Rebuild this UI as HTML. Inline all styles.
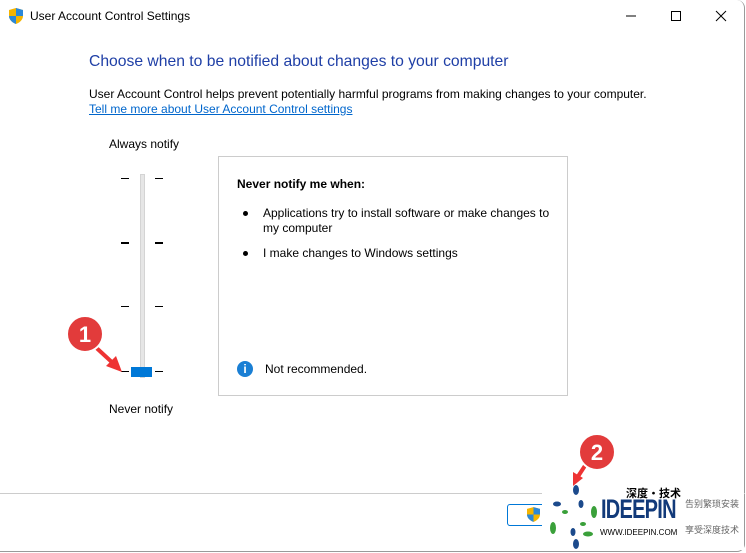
<!DOCTYPE html>
<html><head><meta charset="utf-8"><style>
*{margin:0;padding:0;box-sizing:border-box}
body{width:746px;height:553px;background:#fff;font-family:"Liberation Sans","Noto Sans CJK SC",sans-serif;position:relative;overflow:hidden;color:#000}
.a{position:absolute}
.win{left:0;top:0;width:745px;height:552px;border-right:1px solid #9a9a9a;border-bottom:1px solid #9a9a9a;border-bottom-right-radius:8px;border-top-right-radius:8px}
.t{font-size:12px}
.tick{position:absolute;height:2px;width:8px;background:#000}
</style></head><body>
<div class="a win"></div>
<svg class="a" style="left:9px;top:8px" width="14" height="16" viewBox="0 0 14 16"><path d="M7 0 L14 2 V8 C14 12 10 15 7 16 C4 15 0 12 0 8 V2Z" fill="#f4b400"/><path d="M7 0 L14 2 V8 H7Z" fill="#2b88d8"/><path d="M0 8 H7 V16 C4 15 0 12 0 8Z" fill="#2b88d8"/></svg>
<div class="a t" style="left:30px;top:9px;font-size:12px">User Account Control Settings</div>
<svg class="a" style="left:620px;top:8px" width="120" height="16"><path d="M6 8h10" stroke="#000"/><rect x="51.5" y="3.5" width="9" height="9" fill="none" stroke="#000"/><path d="M96 3l10 10M106 3l-10 10" stroke="#000"/></svg>
<div class="a" style="left:89px;top:53px;font-size:15.7px;color:#1f3fa6">Choose when to be notified about changes to your computer</div>
<div class="a t" style="left:89px;top:87px">User Account Control helps prevent potentially harmful programs from making changes to your computer.</div>
<div class="a t" style="left:89px;top:102px;color:#0066cc;text-decoration:underline">Tell me more about User Account Control settings</div>
<div class="a t" style="left:109px;top:137px">Always notify</div>
<div class="a t" style="left:109px;top:402px">Never notify</div>
<div class="a" style="left:140px;top:174px;width:5px;height:204px;background:#e6e6e6;border:1px solid #d4d4d4"></div>
<div class="tick" style="left:121px;top:178px;height:1px"></div><div class="tick" style="left:155px;top:178px;height:1px"></div>
<div class="tick" style="left:121px;top:242px"></div><div class="tick" style="left:155px;top:242px"></div>
<div class="tick" style="left:121px;top:306px;height:1px"></div><div class="tick" style="left:155px;top:306px;height:1px"></div>
<div class="tick" style="left:121px;top:371px;height:1px"></div><div class="tick" style="left:155px;top:371px;height:1px"></div>
<div class="a" style="left:131px;top:367px;width:21px;height:10px;background:#0078d7"></div>
<div class="a" style="left:218px;top:156px;width:350px;height:240px;border:1px solid #ccc"></div>
<div class="a t" style="left:237px;top:177px;font-weight:bold">Never notify me when:</div>
<div class="a" style="left:243px;top:211px;width:5px;height:5px;border-radius:50%;background:#000"></div>
<div class="a t" style="left:263px;top:206px;line-height:15px">Applications try to install software or make changes to<br>my computer</div>
<div class="a" style="left:243px;top:251px;width:5px;height:5px;border-radius:50%;background:#000"></div>
<div class="a t" style="left:263px;top:246px">I make changes to Windows settings</div>
<div class="a" style="left:237px;top:361px;width:16px;height:16px;border-radius:50%;background:#1a7fd4;color:#fff;font-weight:bold;font-size:12px;text-align:center;line-height:16px">i</div>
<div class="a t" style="left:265px;top:362px">Not recommended.</div>
<div class="a" style="left:0;top:493px;width:745px;height:1px;background:#ccc"></div>
<div class="a" style="left:507px;top:504px;width:60px;height:22px;border:1px solid #0078d7;border-radius:3px"></div>
<svg class="a" style="left:527px;top:507px" width="13" height="15" viewBox="0 0 14 16"><path d="M7 0 L14 2 V8 C14 12 10 15 7 16 C4 15 0 12 0 8 V2Z" fill="#f4b400"/><path d="M7 0 L14 2 V8 H7Z" fill="#2b88d8"/><path d="M0 8 H7 V16 C4 15 0 12 0 8Z" fill="#2b88d8"/></svg>
<svg class="a" style="left:60px;top:310px" width="70" height="70"><path d="M30 32 L55 55" stroke="#e33" stroke-width="4"/><path d="M62 62 L46 56 L56 46Z" fill="#e33"/><circle cx="25" cy="24" r="18" fill="#e23b3b" stroke="#fff" stroke-width="2"/><text x="25" y="32" font-family="Liberation Sans" font-size="22" font-weight="bold" fill="#fff" text-anchor="middle">1</text></svg>
<svg class="a" style="left:565px;top:428px" width="60" height="60"><path d="M25 30 L12 50" stroke="#e33" stroke-width="4"/><path d="M8 58 L8 44 L18 50Z" fill="#e33"/><circle cx="32" cy="24" r="18" fill="#e23b3b" stroke="#fff" stroke-width="2"/><text x="32" y="32" font-family="Liberation Sans" font-size="22" font-weight="bold" fill="#fff" text-anchor="middle">2</text></svg>
<div class="a" style="left:542px;top:488px;width:202px;height:62px;background:#fff"></div>
<svg class="a" style="left:543px;top:482px" width="60" height="70"><g fill="#1c4a8c"><ellipse cx="33" cy="8" rx="3" ry="5"/><ellipse cx="38" cy="22" rx="2.5" ry="4"/><ellipse cx="14" cy="22" rx="4" ry="2.5"/><ellipse cx="30" cy="50" rx="2.5" ry="4"/><ellipse cx="33" cy="62" rx="3" ry="5"/></g><g fill="#3aa03a"><ellipse cx="22" cy="30" rx="3" ry="2"/><ellipse cx="51" cy="30" rx="3" ry="6"/><ellipse cx="10" cy="46" rx="3" ry="6"/><ellipse cx="45" cy="52" rx="5" ry="2.5"/><ellipse cx="40" cy="42" rx="3" ry="2"/></g></svg>
<div class="a" style="left:626px;top:485px;font-size:11px;font-weight:bold">深度・技术</div>
<div class="a" style="left:601px;top:494px;font-size:27px;font-weight:bold;color:#123a7a;letter-spacing:-1px;transform:scaleX(0.74);transform-origin:left">IDEEPIN</div>
<div class="a" style="left:600px;top:528px;font-size:8px">WWW.IDEEPIN.COM</div>
<div class="a" style="left:685px;top:497px;font-size:9px;color:#666">告别繁琐安装</div>
<div class="a" style="left:685px;top:523px;font-size:9px;color:#666">享受深度技术</div>
</body></html>
